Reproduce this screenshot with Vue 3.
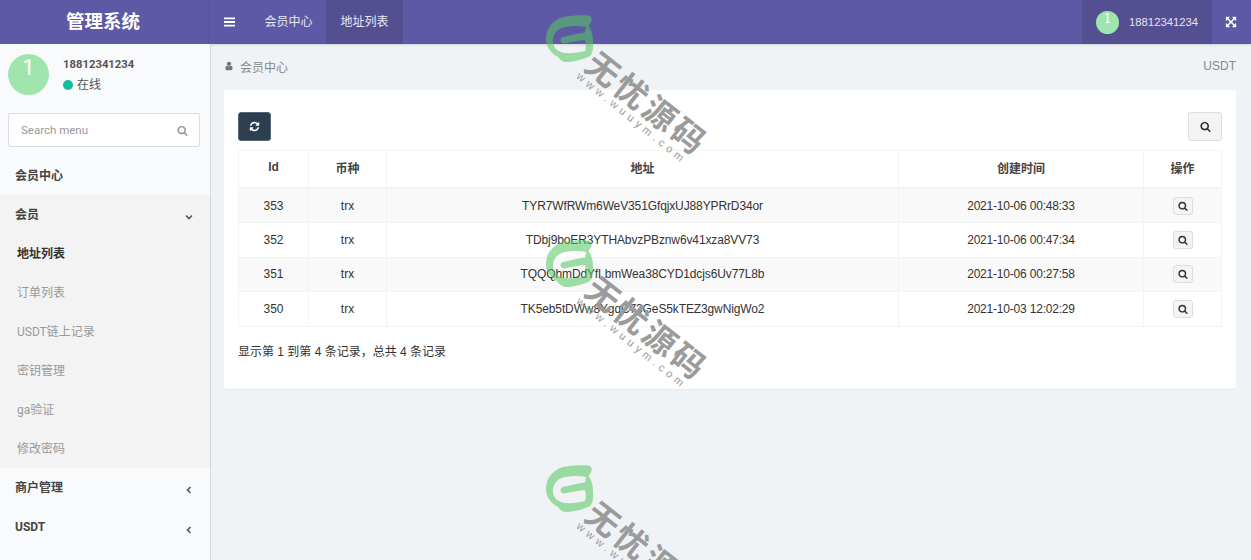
<template>
  <div class="app">
    <!-- Top bar -->
    <header class="topbar">
      <div class="brand">管理系统</div>
      <nav class="topnav">
        <a class="toggle">
          <svg class="ic-bars" viewBox="0 0 12 10"><path d="M0 0h12v2H0zM0 4h12v2H0zM0 8h12v2H0z" /></svg>
        </a>
        <a class="tab">会员中心</a>
        <a class="tab active">地址列表</a>
      </nav>
      <div class="topright">
        <div class="user">
          <span class="avatar small">1</span>
          <span>18812341234</span>
        </div>
        <a class="expand">
          <svg viewBox="0 0 1792 1792"><path :d="icons.expand" /></svg>
        </a>
      </div>
    </header>

    <div class="body">
      <!-- Sidebar -->
      <aside class="sidebar">
        <div class="profile">
          <span class="avatar">1</span>
          <div class="profile-info">
            <div class="name">18812341234</div>
            <div class="status"><i class="dot"></i>在线</div>
          </div>
        </div>
        <div class="search">
          <span>Search menu</span>
          <svg viewBox="0 0 1792 1792"><path :d="icons.search" /></svg>
        </div>
        <ul class="menu">
          <li class="menu-item">会员中心</li>
          <li class="group">
            <div class="menu-item">
              会员
              <svg class="chev" viewBox="0 0 10 10"><path d="M2 3.5l3 3 3-3" /></svg>
            </div>
            <div
              v-for="item in subMenu"
              :key="item"
              class="sub-item"
              :class="{ current: item === '地址列表' }"
            >{{ item }}</div>
          </li>
          <li class="menu-item">
            商户管理
            <svg class="chev" viewBox="0 0 10 10"><path d="M6.5 2l-3 3 3 3" /></svg>
          </li>
          <li class="menu-item last">
            USDT
            <svg class="chev" viewBox="0 0 10 10"><path d="M6.5 2l-3 3 3 3" /></svg>
          </li>
        </ul>
      </aside>

      <!-- Content -->
      <main class="content">
        <div class="crumbs">
          <span class="crumb-left">
            <svg viewBox="0 0 1792 1792"><path :d="icons.user" /></svg>
            会员中心
          </span>
          <span>USDT</span>
        </div>

        <section class="card">
          <div class="toolbar">
            <button class="btn dark">
              <svg viewBox="0 0 1792 1792"><path :d="icons.refresh" /></svg>
            </button>
            <button class="btn light">
              <svg viewBox="0 0 1792 1792"><path :d="icons.search" /></svg>
            </button>
          </div>

          <table class="table">
            <colgroup>
              <col style="width: 70px" />
              <col style="width: 78px" />
              <col style="width: 512px" />
              <col style="width: 245px" />
              <col />
            </colgroup>
            <thead>
              <tr>
                <th><span>Id</span></th>
                <th><span>币种</span></th>
                <th><span>地址</span></th>
                <th><span>创建时间</span></th>
                <th><span>操作</span></th>
              </tr>
            </thead>
            <tbody>
              <tr v-for="row in rows" :key="row.id">
                <td>{{ row.id }}</td>
                <td>trx</td>
                <td class="address">{{ row.address }}</td>
                <td class="time">{{ row.time }}</td>
                <td>
                  <button class="btn mini">
                    <svg viewBox="0 0 1792 1792"><path :d="icons.search" /></svg>
                  </button>
                </td>
              </tr>
            </tbody>
          </table>

          <div class="summary">显示第 1 到第 4 条记录，总共 4 条记录</div>
        </section>
      </main>
    </div>

    <!-- Watermark over the page -->
    <div
      v-for="top in marks"
      :key="top"
      class="mark"
      :style="{ top: top + 'px' }"
    >
      <svg class="mark-logo" viewBox="0 0 48 48">
        <path
          fill-rule="evenodd"
          d="M17 2C25 0.5 34 0 42 0.5C46 1 46.5 5 45 7L42.5 11C46 15 47.5 23 47 31C47 36 46 39 44 41C36 45 28 46.5 22 47C17 47.5 14 45 12 42C5 38 0 32 0 24C0 13 7 5 17 2ZM40 12C32 10.5 24 11 17 12.5C10 15 7 20 7 26C7 32 11 37 19 38C26 38.5 34 37.5 39 36C40 33 40 30 39 25C33 25.5 24 27 18 28.5C14 28 13 23 17 22C24 20.5 32 18 39 17.5Z"
        />
      </svg>
      <div class="mark-title">无忧源码</div>
      <div class="mark-url">www.wuuym.com</div>
    </div>
  </div>
</template>

<script setup>
const icons = {
  search: 'M1216 832q0-185-131.5-316.5t-316.5-131.5-316.5 131.5-131.5 316.5 131.5 316.5 316.5 131.5 316.5-131.5 131.5-316.5zm512 832q0 52-38 90t-90 38q-54 0-90-38l-343-342q-179 124-399 124-143 0-273.5-55.5t-225-150-150-225-55.5-273.5 55.5-273.5 150-225 225-150 273.5-55.5 273.5 55.5 225 150 150 225 55.5 273.5q0 220-124 399l343 343q37 37 37 90z',
  refresh: 'M1639 1056q0 5-1 7-64 268-268 434.5t-478 166.5q-146 0-282.5-55t-243.5-157l-129 129q-19 19-45 19t-45-19-19-45v-448q0-26 19-45t45-19h448q26 0 45 19t19 45-19 45l-137 137q71 66 161 102t187 36q134 0 250-65t186-179q11-17 53-117 8-23 30-23h192q13 0 22.5 9.5t9.5 22.5zm25-800v448q0 26-19 45t-45 19h-448q-26 0-45-19t-19-45 19-45l138-138q-148-137-349-137-134 0-250 65t-186 179q-11 17-53 117-8 23-30 23h-199q-13 0-22.5-9.5t-9.5-22.5v-7q65-268 270-434.5t480-166.5q146 0 284 55.5t245 156.5l130-129q19-19 45-19t45 19 19 45z',
  expand: 'M1411 541l-355 355 355 355 144-144q29-31 70-14 39 17 39 59v448q0 26-19 45t-45 19h-448q-42 0-59-40-17-39 14-69l144-144-355-355-355 355 144 144q31 30 14 69-17 40-59 40h-448q-26 0-45-19t-19-45v-448q0-42 40-59 39-17 69 14l144 144 355-355-355-355-144 144q-19 19-45 19-12 0-24-5-40-17-40-59v-448q0-26 19-45t45-19h448q42 0 59 40 17 39-14 69l-144 144 355 355 355-355-144-144q-31-30-14-69 17-40 59-40h448q26 0 45 19t19 45v448q0 42-39 59-13 5-25 5-26 0-45-19z',
  user: 'M1536 1399q0 109-62.5 187t-150.5 78h-854q-88 0-150.5-78t-62.5-187q0-85 8.5-160.5t31.5-152 58.5-131 94-89 134.5-34.5q131 128 313 128t313-128q76 0 134.5 34.5t94 89 58.5 131 31.5 152 8.5 160.5zm-256-887q0 159-112.5 271.5t-271.5 112.5-271.5-112.5-112.5-271.5 112.5-271.5 271.5-112.5 271.5 112.5 112.5 271.5z'
}

const subMenu = ['地址列表', '订单列表', 'USDT链上记录', '密钥管理', 'ga验证', '修改密码']

const rows = [
  { id: 353, address: 'TYR7WfRWm6WeV351GfqjxUJ88YPRrD34or', time: '2021-10-06 00:48:33' },
  { id: 352, address: 'TDbj9boER3YTHAbvzPBznw6v41xza8VV73', time: '2021-10-06 00:47:34' },
  { id: 351, address: 'TQQQhmDdYfLbmWea38CYD1dcjs6Uv77L8b', time: '2021-10-06 00:27:58' },
  { id: 350, address: 'TK5eb5tDWw8YgqC73GeS5kTEZ3gwNigWo2', time: '2021-10-03 12:02:29' }
]

const marks = [15, 240, 465]
</script>

<style>
html,
body {
  margin: 0;
  overflow: hidden;
}
</style>

<style scoped>
.app {
  position: relative;
  display: flex;
  flex-direction: column;
  height: 560px;
  overflow: hidden;
  font-family: "Liberation Sans", "Noto Sans CJK SC", sans-serif;
  font-size: 12px;
  color: #333;
  background: #f0f3f6;
}

/* Top bar */
.topbar {
  display: flex;
  flex: none;
  height: 44px;
  color: #fff;
  background: #5e59a5;
  box-shadow: 0 1px 2px rgba(0, 0, 0, 0.12);
}

.brand {
  width: 209px;
  padding-right: 2px;
  box-sizing: border-box;
  border-right: 1px solid #5a55a0;
  font-size: 18.5px;
  font-weight: 700;
  line-height: 44px;
  text-align: center;
}

.topnav {
  display: flex;
  flex: 1;
}

.toggle {
  display: flex;
  align-items: center;
  padding: 0 15px;
}

.ic-bars {
  width: 11px;
  height: 10px;
  fill: #fff;
}

.tab {
  width: 77px;
  color: #e8e7f3;
  font-size: 12px;
  line-height: 44px;
  text-align: center;
}

.tab.active {
  margin-left: -1px;
  background: #544f91;
}

.topright {
  display: flex;
}

.user {
  display: flex;
  align-items: center;
  gap: 10px;
  width: 130px;
  box-sizing: border-box;
  padding-left: 14px;
  color: #e4e3f0;
  background: #544f91;
  font-size: 11.3px;
}

.expand {
  display: flex;
  align-items: center;
  padding: 0 14px 0 13px;
}

.expand svg {
  width: 12px;
  height: 12px;
  fill: #fff;
}

.avatar {
  display: block;
  flex: none;
  width: 41px;
  height: 41px;
  padding-top: 1px;
  box-sizing: border-box;
  border-radius: 50%;
  color: #fff;
  background: #a0e5ae;
  font-size: 22px;
  line-height: 26px;
  text-align: center;
}

.avatar.small {
  width: 23px;
  height: 23px;
  padding-top: 0;
  font-family: "DejaVu Serif", serif;
  font-size: 12px;
  line-height: 17px;
}

.body {
  display: flex;
  flex: 1;
  min-height: 0;
}

/* Sidebar */
.sidebar {
  flex: none;
  width: 210px;
  border-right: 1px solid #d2d6de;
  background: #f9fafc;
  font-family: Roboto, "Noto Sans CJK SC", sans-serif;
}

.profile {
  display: flex;
  gap: 14px;
  padding: 10px 8px 0;
}

.profile-info {
  padding-top: 3px;
  color: #555;
}

.name {
  font-size: 11.3px;
  font-weight: 700;
  line-height: 16px;
}

.status {
  display: flex;
  align-items: center;
  gap: 4px;
  margin-top: 4px;
  line-height: 16px;
}

.dot {
  width: 10px;
  height: 10px;
  border-radius: 50%;
  background: #13bd9c;
}

.search {
  display: flex;
  align-items: center;
  justify-content: space-between;
  height: 32px;
  margin: 18px 10px 0 8px;
  padding: 0 11px 0 12px;
  border: 1px solid #dcdfe6;
  border-radius: 2px;
  color: #999;
  background: #fff;
  font-size: 11.5px;
}

.search svg {
  width: 11px;
  height: 11px;
  fill: #999;
}

.menu {
  margin: 9px 0 0;
  padding: 0;
  list-style: none;
}

.menu-item {
  display: flex;
  align-items: center;
  justify-content: space-between;
  height: 37px;
  padding: 0 16px 2px 15px;
  color: #444;
  font-weight: 700;
}

.menu-item.last {
  padding-top: 1px;
  padding-bottom: 1px;
}

.chev {
  width: 10px;
  height: 10px;
  margin-top: 6px;
  fill: none;
  stroke: #555;
  stroke-width: 1.6;
}

.group {
  background: #f3f3f4;
}

.sub-item {
  padding: 1px 0 0 17px;
  color: #999;
  line-height: 38px;
}

.sub-item.current {
  color: #333;
  font-weight: 700;
}

/* Content */
.content {
  flex: 1;
  min-width: 0;
  padding: 0 15px 0 13px;
}

.crumbs {
  display: flex;
  align-items: center;
  justify-content: space-between;
  height: 46px;
  padding-bottom: 2px;
  box-sizing: border-box;
  color: #888;
}

.crumb-left {
  display: flex;
  align-items: center;
  gap: 6px;
}

.crumb-left svg {
  width: 10px;
  height: 10px;
  fill: #777;
}

.card {
  height: 299px;
  box-sizing: border-box;
  padding: 22px 14px 0;
  border-radius: 3px;
  background: #fff;
  box-shadow: 0 1px 1px rgba(0, 0, 0, 0.04);
}

.toolbar {
  display: flex;
  justify-content: space-between;
  margin-bottom: 9px;
}

.btn {
  display: flex;
  align-items: center;
  justify-content: center;
  padding: 0;
  border: 1px solid #ddd;
  border-radius: 3px;
  cursor: pointer;
  background: #f4f4f4;
}

.btn svg {
  width: 11px;
  height: 11px;
  fill: #333;
}

.btn.dark {
  width: 33px;
  height: 29px;
  border-color: #55677a;
  background: #2c3e50;
}

.btn.dark svg {
  fill: #fff;
}

.btn.light {
  width: 34px;
  height: 29px;
}

.btn.mini {
  width: 20px;
  height: 18px;
  margin: 0 auto;
}

.btn.mini svg {
  width: 10px;
  height: 10px;
}

.table {
  width: 100%;
  table-layout: fixed;
  border-collapse: collapse;
  border: 1px solid #f4f4f4;
}

.table th,
.table td {
  padding: 0;
  border: 1px solid #f4f4f4;
  text-align: center;
}

.table th {
  height: 36px;
  border-bottom-width: 2px;
  color: #444;
}

.table th span {
  position: relative;
  top: -2px;
}

.table td {
  height: 33.4px;
}

.table td.time {
  letter-spacing: -0.2px;
}

.table td.address {
  letter-spacing: -0.12px;
}

.table tbody tr:nth-child(odd) {
  background: #f9f9f9;
}

.summary {
  margin-top: 16px;
  line-height: 18px;
}

/* Watermark */
.mark {
  position: absolute;
  left: 546px;
  width: 170px;
  height: 160px;
  pointer-events: none;
}

.mark-logo {
  position: absolute;
  left: 0;
  top: 0;
  width: 48px;
  height: 48px;
  opacity: 0.56;
  fill: rgb(87, 200, 98);
}

.mark-title {
  position: absolute;
  left: 22px;
  top: 70px;
  width: 160px;
  color: #9b9b9b;
  font-family: "Noto Sans CJK SC", sans-serif;
  font-size: 33px;
  font-weight: 700;
  line-height: 34px;
  letter-spacing: 3px;
  text-align: center;
  white-space: nowrap;
  transform: rotate(38deg);
}

.mark-url {
  position: absolute;
  left: 6px;
  top: 96px;
  width: 160px;
  color: #9a9a9a;
  font-size: 11px;
  line-height: 14px;
  letter-spacing: 4.1px;
  text-align: center;
  white-space: nowrap;
  transform: rotate(39deg);
}
</style>
